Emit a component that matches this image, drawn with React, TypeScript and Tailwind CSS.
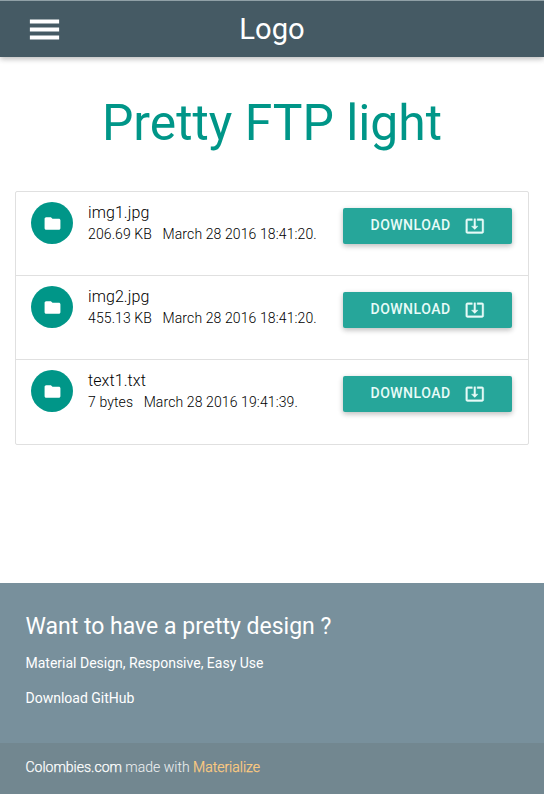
const files = [
  { name: 'img1.jpg', size: '206.69 KB', date: 'March 28 2016 18:41:20.' },
  { name: 'img2.jpg', size: '455.13 KB', date: 'March 28 2016 18:41:20.' },
  { name: 'text1.txt', size: '7 bytes', date: 'March 28 2016 19:41:39.' },
];

function Icon({ d, className }: { d: string; className: string }) {
  return (
    <svg viewBox="0 0 24 24" fill="currentColor" className={className}>
      <path d={d} />
    </svg>
  );
}

const MENU = 'M3 18.1h18v-2.4H3v2.4zm0-4.9h18v-2.4H3v2.4zm0-7.3v2.4h18V5.9H3z';
const FOLDER =
  'M10 4H4c-1.1 0-1.99.9-1.99 2L2 18c0 1.1.9 2 2 2h16c1.1 0 2-.9 2-2V8c0-1.1-.9-2-2-2h-8l-2-2z';
const DOWNLOAD =
  'M12 16.5l4-4h-3v-9h-2v9H8l4 4zm9-13h-6v1.99h6v14.03H3V5.49h6V3.5H3c-1.1 0-2 .9-2 2v14c0 1.1.9 2 2 2h18c1.1 0 2-.9 2-2v-14c0-1.1-.9-2-2-2z';

function FileRow({ name, size, date }: { name: string; size: string; date: string }) {
  return (
    <li className="flex h-[84px] items-start border-b border-[#e0e0e0] pt-[10px] pr-4 pl-[15px] last:border-b-0">
      <span className="flex size-[42px] shrink-0 items-center justify-center rounded-full bg-[#009688] text-white">
        <Icon d={FOLDER} className="size-[19px]" />
      </span>
      <div className="ml-[15px] grow text-[14px] leading-[22px] font-light tracking-[0.11px] whitespace-pre text-black">
        <p className="text-[16px] leading-[21px] tracking-[0.08px]">{name}</p>
        <p>
          {size}
          <span className="ml-[10.5px]">{date}</span>
        </p>
      </div>
      <button className="mt-[6px] flex h-9 w-[169px] shrink-0 items-center rounded-[2px] bg-[#26a69a] pl-[27.5px] text-[14px] font-medium tracking-[0.5px] text-[#e8fbf8] shadow-[0_2px_5px_0_rgba(0,0,0,0.16),0_2px_6px_0_rgba(0,0,0,0.12)]">
        <span className="pb-[2px]">DOWNLOAD</span>
        <Icon d={DOWNLOAD} className="ml-[14.5px] size-[19.5px] stroke-current stroke-[0.5]" />
      </button>
    </li>
  );
}

export default function App() {
  return (
    <div className="flex h-[794px] w-[544px] flex-col overflow-hidden bg-white font-[Roboto,sans-serif]">
      <nav className="grid h-[57px] shrink-0 grid-cols-[1fr_auto_1fr] items-center border-t border-[#90a0a6] bg-[#455a64] pl-[25px] text-white shadow-[0_2px_5px_0_rgba(0,0,0,0.16),0_2px_6px_0_rgba(0,0,0,0.12)]">
        <Icon d={MENU} className="size-[39px]" />
        <a className="-ml-[25px] text-[29.2px] leading-[56px]">Logo</a>
      </nav>
      <h1 className="mt-[38px] text-center text-[49.8px] leading-[56px] text-[#009688]">Pretty FTP light</h1>
      <ul className="mx-[15px] mt-10 h-[254px] shrink-0 rounded-[2px] border border-[#e0e0e0]">
        {files.map((f) => (
          <FileRow key={f.name} {...f} />
        ))}
      </ul>
      <footer className="mt-auto flex h-[211px] shrink-0 flex-col bg-[#78909c] text-white">
        <div className="grow px-[25.5px] pt-[31px] text-[14px] leading-[22px]">
          <h5 className="text-[23px] leading-[26px]">Want to have a pretty design ?</h5>
          <p className="mt-3">Material Design, Responsive, Easy Use</p>
          <p className="mt-[13px]">Download GitHub</p>
        </div>
        <div className="h-[51px] bg-[#728790] px-[25.5px] text-[14px] leading-[49px] font-light text-white/90">
          <span className="text-white [-webkit-text-stroke:0.25px_currentColor]">Colombies.com</span> made with{' '}
          <span className="text-[#ffcc80] [-webkit-text-stroke:0.25px_currentColor]">Materialize</span>
        </div>
      </footer>
    </div>
  );
}
